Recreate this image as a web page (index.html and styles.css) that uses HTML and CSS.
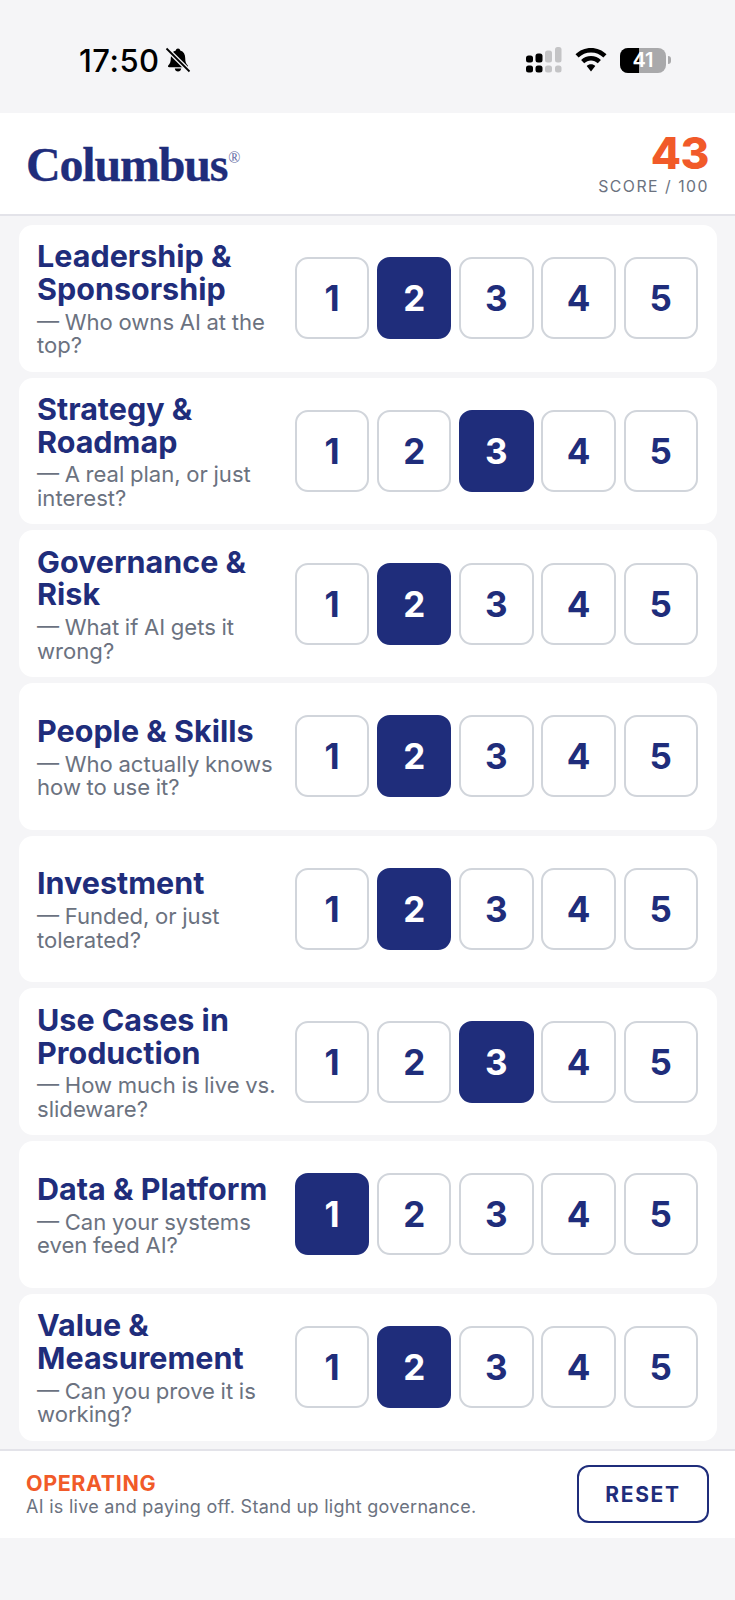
FILE: index.html
```html
<!DOCTYPE html>
<html lang="en">
<head>
    <meta charset="UTF-8">
    <meta name="viewport" content="width=device-width, initial-scale=1.0">
    <title>Columbus AI Score</title>
    <link rel="stylesheet" href="styles.css">
</head>
<body>
    <div class="status-bar">
        <div class="status-left">
            <span class="clock">17:50</span>
            <svg class="bell" viewBox="0 0 26 26" width="26" height="26">
                <path d="M13 1.500c-1.300 0-2 .9-2.200 2C7.300 4.500 5.800 7.300 5.800 11c0 3.800-.8 5.500-2.400 7.200-.8.900-.5 2 .8 2h17.600c1.300 0 1.600-1.100.8-2-1.600-1.700-2.400-3.400-2.400-7.200 0-3.700-1.500-6.500-5-7.500-.2-1.100-.9-2-2.200-2z" fill="#000"/>
                <path d="M9.800 21.500c.2 1.800 1.500 3 3.200 3s3-1.200 3.200-3z" fill="#000"/>
                <path d="M1.500 1.500l23 23" stroke="#f5f5f7" stroke-width="4.500"/>
                <path d="M1.500 1.500l23 23" stroke="#000" stroke-width="1.800"/>
            </svg>
        </div>
        <div class="status-right">
            <svg class="signal" viewBox="0 0 36 26" width="36" height="26">
                <rect x="0" y="8.500" width="7" height="7" rx="2.500" fill="#000"/>
                <rect x="9.500" y="6.500" width="7" height="9" rx="2.500" fill="#000"/>
                <rect x="19" y="3.500" width="7" height="12" rx="2.500" fill="#c4c4c6"/>
                <rect x="29" y="0" width="6.500" height="15.500" rx="2.500" fill="#c4c4c6"/>
                <rect x="0" y="18.500" width="7" height="7" rx="2.500" fill="#000"/>
                <rect x="9.500" y="18.500" width="7" height="7" rx="2.500" fill="#000"/>
                <rect x="19" y="18.500" width="7" height="7" rx="2.500" fill="#c4c4c6"/>
                <rect x="29" y="18.500" width="6.500" height="7" rx="2.500" fill="#c4c4c6"/>
            </svg>
            <svg class="wifi" viewBox="0 0 32 24" width="32" height="24">
                <path d="M16 0C10 0 4.500 2.400.5 6.300l3.100 3.200C6.800 6.300 11.200 4.400 16 4.400s9.200 1.900 12.400 5.100l3.100-3.200C27.500 2.400 22 0 16 0z" fill="#000"/>
                <path d="M16 8c-3.800 0-7.300 1.500-9.900 4l3.100 3.200c1.800-1.700 4.200-2.800 6.800-2.800s5 1.100 6.800 2.800l3.100-3.200C23.300 9.500 19.800 8 16 8z" fill="#000"/>
                <path d="M16 16.200c-1.700 0-3.200.7-4.300 1.700L16 23.500l4.300-5.600c-1.100-1-2.600-1.700-4.300-1.700z" fill="#000"/>
            </svg>
            <div class="battery">
                <div class="battery-body"><span class="battery-fill"></span><span class="battery-num">41</span></div>
                <span class="battery-tip"></span>
            </div>
        </div>
    </div>

    <header class="top-bar">
        <div class="logo">Columbus<sup>®</sup></div>
        <div class="score">
            <div class="score-num">43</div>
            <div class="score-label">SCORE / 100</div>
        </div>
    </header>

    <main class="list">
        <section class="card">
            <div class="card-text">
                <h2>Leadership &amp; Sponsorship</h2>
                <p>— Who owns AI at the top?</p>
            </div>
            <div class="picks">
                <button>1</button><button class="on">2</button><button>3</button><button>4</button><button>5</button>
            </div>
        </section>
        <section class="card">
            <div class="card-text">
                <h2>Strategy &amp; Roadmap</h2>
                <p>— A real plan, or just interest?</p>
            </div>
            <div class="picks">
                <button>1</button><button>2</button><button class="on">3</button><button>4</button><button>5</button>
            </div>
        </section>
        <section class="card">
            <div class="card-text">
                <h2>Governance &amp; Risk</h2>
                <p>— What if AI gets it wrong?</p>
            </div>
            <div class="picks">
                <button>1</button><button class="on">2</button><button>3</button><button>4</button><button>5</button>
            </div>
        </section>
        <section class="card">
            <div class="card-text">
                <h2>People &amp; Skills</h2>
                <p>— Who actually knows how to use it?</p>
            </div>
            <div class="picks">
                <button>1</button><button class="on">2</button><button>3</button><button>4</button><button>5</button>
            </div>
        </section>
        <section class="card">
            <div class="card-text">
                <h2>Investment</h2>
                <p>— Funded, or just tolerated?</p>
            </div>
            <div class="picks">
                <button>1</button><button class="on">2</button><button>3</button><button>4</button><button>5</button>
            </div>
        </section>
        <section class="card">
            <div class="card-text">
                <h2>Use Cases in Production</h2>
                <p>— How much is live vs. slideware?</p>
            </div>
            <div class="picks">
                <button>1</button><button>2</button><button class="on">3</button><button>4</button><button>5</button>
            </div>
        </section>
        <section class="card">
            <div class="card-text">
                <h2>Data &amp; Platform</h2>
                <p>— Can your systems even feed AI?</p>
            </div>
            <div class="picks">
                <button class="on">1</button><button>2</button><button>3</button><button>4</button><button>5</button>
            </div>
        </section>
        <section class="card">
            <div class="card-text">
                <h2>Value &amp; Measurement</h2>
                <p>— Can you prove it is working?</p>
            </div>
            <div class="picks">
                <button>1</button><button class="on">2</button><button>3</button><button>4</button><button>5</button>
            </div>
        </section>
    </main>

    <footer class="bottom-bar">
        <div class="verdict">
            <div class="verdict-title">OPERATING</div>
            <div class="verdict-text">AI is live and paying off. Stand up light governance.</div>
        </div>
        <button class="reset">RESET</button>
    </footer>
</body>
</html>
```

FILE: styles.css
```css
* {
    box-sizing: border-box;
}
body {
    font-family: Inter, "Liberation Sans", sans-serif;
    margin: 0;
    padding: 0;
    height: 1600px;
    overflow: hidden;
    background-color: #f5f5f7;
    color: #1f2d7b;
}

/* status bar */
.status-bar {
    height: 113px;
    display: flex;
    justify-content: space-between;
    align-items: flex-start;
    padding: 47px 64px 0 79px;
}
.status-left {
    display: flex;
    align-items: center;
    gap: 5px;
}
.clock {
    font-size: 31px;
    font-weight: 500;
    line-height: 25px;
    letter-spacing: 0.500px;
    color: #000;
}
.status-right {
    display: flex;
    align-items: center;
    gap: 13px;
}
.battery {
    display: flex;
    align-items: center;
    gap: 2px;
}
.battery-body {
    position: relative;
    width: 46px;
    height: 25px;
    border-radius: 8px;
    background-color: #a9a9ab;
    overflow: hidden;
}
.battery-fill {
    position: absolute;
    left: 0;
    top: 0;
    bottom: 0;
    width: 19px;
    background-color: #000;
}
.battery-num {
    position: relative;
    display: block;
    color: #fff;
    font-size: 20px;
    font-weight: 600;
    line-height: 25px;
    text-align: center;
}
.battery-tip {
    width: 3px;
    height: 8px;
    border-radius: 0 3px 3px 0;
    background-color: #a9a9ab;
}

/* header */
.top-bar {
    height: 103px;
    background-color: #fff;
    border-bottom: 2px solid #e3e3e9;
    display: flex;
    justify-content: space-between;
    align-items: center;
    padding: 0 26px 0 26px;
}
.logo {
    font-family: "Liberation Serif", serif;
    font-weight: 700;
    font-size: 48px;
    letter-spacing: -1.200px;
    line-height: 1;
    padding-top: 2px;
    -webkit-text-stroke: 0.300px #1f2d7b;
}
.logo sup {
    font-size: 16px;
    font-weight: 400;
    vertical-align: 18px;
    line-height: 0;
    margin-left: 1px;
    color: #5f6aa3;
    -webkit-text-stroke: 0;
}
.score {
    text-align: right;
}
.score-num {
    font-size: 44px;
    font-weight: 800;
    line-height: 44px;
    letter-spacing: -0.500px;
    color: #f15a29;
}
.score-label {
    font-size: 15.800px;
    line-height: 20px;
    letter-spacing: 1.500px;
    color: #6b7280;
    margin-top: 2px;
}

/* rows */
.list {
    padding: 9px 18.500px 0;
    display: flex;
    flex-direction: column;
    gap: 6px;
}
.card {
    height: 146.700px;
    background-color: #fff;
    border-radius: 14px;
    display: flex;
    align-items: center;
    padding: 0 18.500px;
}
.card-text {
    flex: 1;
    min-width: 0;
    padding: 1.500px 10px 0 0;
}
.card-text h2 {
    margin: 0;
    font-size: 30.500px;
    font-weight: 700;
    line-height: 32.700px;
}
.card-text p {
    margin: 5px 0 0;
    font-size: 22.100px;
    line-height: 23.500px;
    word-spacing: -0.600px;
    color: #6b7280;
}
.picks {
    display: flex;
    gap: 7.700px;
}
.picks button {
    width: 74.500px;
    height: 82px;
    padding: 0;
    background-color: #fff;
    border: 2px solid #d1d5db;
    border-radius: 13px;
    color: #1f2d7b;
    font-family: inherit;
    font-size: 35px;
    font-weight: 700;
}
.picks button.on {
    background-color: #1f2d7b;
    border-color: #1f2d7b;
    color: #fff;
}

/* footer */
.bottom-bar {
    margin-top: 8px;
    height: 89px;
    background-color: #fff;
    border-top: 2px solid #e3e3e9;
    display: flex;
    justify-content: space-between;
    align-items: center;
    padding: 0 26px;
}
.verdict-title {
    font-size: 21.500px;
    font-weight: 700;
    line-height: 24px;
    letter-spacing: 0.600px;
    color: #f15a29;
}
.verdict-text {
    font-size: 18px;
    line-height: 23px;
    letter-spacing: 0.280px;
    color: #6b7280;
}
.reset {
    width: 132px;
    height: 58px;
    background-color: #fff;
    border: 2.500px solid #1f2d7b;
    border-radius: 12px;
    color: #1f2d7b;
    font-family: inherit;
    font-size: 21px;
    font-weight: 700;
    letter-spacing: 1.700px;
}
```
